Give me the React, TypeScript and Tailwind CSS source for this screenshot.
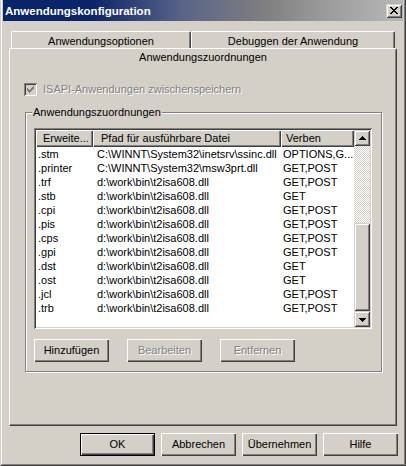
import React from "react";

const rows: [string, string, string][] = [
  [".stm", "C:\\WINNT\\System32\\inetsrv\\ssinc.dll", "OPTIONS,G..."],
  [".printer", "C:\\WINNT\\System32\\msw3prt.dll", "GET,POST"],
  [".trf", "d:\\work\\bin\\t2isa608.dll", "GET,POST"],
  [".stb", "d:\\work\\bin\\t2isa608.dll", "GET"],
  [".cpi", "d:\\work\\bin\\t2isa608.dll", "GET,POST"],
  [".pis", "d:\\work\\bin\\t2isa608.dll", "GET,POST"],
  [".cps", "d:\\work\\bin\\t2isa608.dll", "GET,POST"],
  [".gpi", "d:\\work\\bin\\t2isa608.dll", "GET,POST"],
  [".dst", "d:\\work\\bin\\t2isa608.dll", "GET"],
  [".ost", "d:\\work\\bin\\t2isa608.dll", "GET"],
  [".jcl", "d:\\work\\bin\\t2isa608.dll", "GET,POST"],
  [".trb", "d:\\work\\bin\\t2isa608.dll", "GET,POST"],
];

const raised =
  "shadow-[inset_1px_1px_0_#ffffff,inset_-1px_-1px_0_#404040,inset_-2px_-2px_0_#808080]";
const raisedThumb =
  "shadow-[inset_1px_1px_0_#d4d0c8,inset_-1px_-1px_0_#404040,inset_2px_2px_0_#ffffff,inset_-2px_-2px_0_#808080]";
const disabledText = "text-[#808080] [text-shadow:1px_1px_0_#ffffff]";

function Button({ label, disabled = false, isDefault = false }: { label: string; disabled?: boolean; isDefault?: boolean }) {
  if (isDefault) {
    return (
      <div className="w-[75px] h-[23px] border border-black">
        <div className={`w-full h-full flex items-center justify-center ${raised}`}>{label}</div>
      </div>
    );
  }
  return (
    <div className={`w-[75px] h-[23px] flex items-center justify-center ${raised} ${disabled ? disabledText : ""}`}>
      {label}
    </div>
  );
}

function Arrow({ down = false }: { down?: boolean }) {
  return (
    <div className={`w-[16px] h-[16px] bg-[#d4d0c8] flex items-center justify-center ${raisedThumb}`}>
      <svg width="7" height="4" viewBox="0 0 7 4" shapeRendering="crispEdges" className={down ? "rotate-180 mt-[1px]" : ""}>
        <path d="M3 0h1v1H3z M2 1h3v1H2z M1 2h5v1H1z M0 3h7v1H0z" fill="#000" />
      </svg>
    </div>
  );
}

export default function App() {
  return (
    <div className="w-[406px] h-[466px] bg-[#d4d0c8] border-l border-r border-b border-l-[#d4d0c8] border-r-[#404040] border-b-[#404040] font-['Liberation_Sans',Arial,sans-serif] text-[11px] leading-[13px] text-black">
      <div className="h-full flex flex-col border-l border-r border-b border-l-white border-r-[#808080] border-b-[#808080] px-px pb-px">
        {/* title bar */}
        <div className="h-[21px] shrink-0 flex items-center justify-between pl-[2px] pr-[1px] bg-[linear-gradient(to_right,#0a246a_0%,#0a246a_22%,#5a6488_45%,#808080_66%,#9a9a9a_80%,#b8b8b8_100%)]">
          <span className="font-bold text-white text-[11.5px] pt-[1px]">Anwendungskonfiguration</span>
          <div className={`w-[16px] h-[14px] bg-[#d4d0c8] flex items-center justify-center ${raisedThumb}`}>
            <svg width="8" height="7" viewBox="0 0 8 7" shapeRendering="crispEdges" className="-mt-[1px] -ml-[1px]">
              <path
                d="M0 0h2v1H0z M6 0h2v1H6z M1 1h2v1H1z M5 1h2v1H5z M2 2h4v1H2z M3 3h2v1H3z M2 4h4v1H2z M1 5h2v1H1z M5 5h2v1H5z M0 6h2v1H0z M6 6h2v1H6z"
                fill="#000"
              />
            </svg>
          </div>
        </div>

        {/* tab control */}
        <div className="mt-[10px] ml-[6px] w-[388px] flex flex-col">
          <div className="flex h-[17px] pl-[2px]">
            <div className="w-[180px] h-[17px] border-l border-t border-r border-l-white border-t-white border-r-[#404040] rounded-t-[2px] shadow-[inset_-1px_0_0_#808080] pt-[3px] text-center">
              Anwendungsoptionen
            </div>
            <div className="w-[204px] h-[17px] border-l border-t border-r border-l-white border-t-white border-r-[#404040] rounded-t-[2px] shadow-[inset_-1px_0_0_#808080] pt-[3px] text-center">
              Debuggen der Anwendung
            </div>
          </div>

          <div className="h-[378px] border border-l-white border-t-white border-r-[#404040] border-b-[#404040] rounded-t-[2px] shadow-[inset_-1px_-1px_0_#808080] flex flex-col">
            <div className="h-[17px] pt-[2px] text-center">Anwendungszuordnungen</div>

            <div className="mt-[17px] pl-[14px] flex items-center gap-[6px]">
              <div className="w-[13px] h-[13px] bg-[#d4d0c8] shadow-[inset_1px_1px_0_#808080,inset_-1px_-1px_0_#ffffff,inset_2px_2px_0_#404040,inset_-2px_-2px_0_#d4d0c8] flex items-center justify-center">
                <svg width="7" height="7" viewBox="0 0 7 7" shapeRendering="crispEdges">
                  <path
                    d="M6 0h1v1H6z M5 1h2v1H5z M0 2h1v1H0z M4 2h3v1H4z M0 3h2v1H0z M3 3h3v1H3z M0 4h5v1H0z M1 5h3v1H1z M2 6h1v1H2z"
                    fill="#808080"
                  />
                </svg>
              </div>
              <span className={disabledText}>ISAPI-Anwendungen zwischenspeichern</span>
            </div>

            {/* group box */}
            <div className="relative mt-[16px] ml-[15px] w-[357px] h-[260px] border border-[#808080] shadow-[inset_1px_1px_0_#ffffff,1px_1px_0_#ffffff] pt-[15px] pl-[8px]">
              <span className="absolute left-[6px] -top-[7px] px-px bg-[#d4d0c8]">Anwendungszuordnungen</span>

              <div className="w-[338px] h-[201px] p-[2px] shadow-[inset_1px_1px_0_#808080,inset_-1px_-1px_0_#ffffff,inset_2px_2px_0_#404040,inset_-2px_-2px_0_#d4d0c8]">
                <div className="w-full h-full bg-white flex">
                  <div className="w-[318px] flex flex-col overflow-hidden">
                    <div className="flex h-[17px] shrink-0 bg-[#d4d0c8]">
                      <div className={`w-[57px] pl-[7px] flex items-center ${raised}`}>Erweite...</div>
                      <div className={`w-[188px] pl-[8px] flex items-center ${raised}`}>Pfad für ausführbare Datei</div>
                      <div className={`w-[73px] pl-[5px] flex items-center ${raised}`}>Verben</div>
                    </div>
                    {rows.map(([ext, path, verbs]) => (
                      <div key={ext} className="flex h-[14px] leading-[14px] shrink-0 whitespace-nowrap">
                        <div className="w-[57px] pl-[2px] overflow-hidden">{ext}</div>
                        <div className="w-[188px] pl-[4px] overflow-hidden">{path}</div>
                        <div className="w-[73px] pl-[2px] overflow-hidden">{verbs}</div>
                      </div>
                    ))}
                  </div>
                  <div className="w-[16px] flex flex-col">
                    <Arrow />
                    <div className="h-[77px] bg-[repeating-conic-gradient(#ffffff_0%_25%,#d4d0c8_0%_50%)] bg-[length:2px_2px]" />
                    <div className={`h-[88px] bg-[#d4d0c8] ${raisedThumb}`} />
                    <Arrow down />
                  </div>
                </div>
              </div>

              <div className="mt-[10px] flex gap-[18px]">
                <Button label="Hinzufügen" />
                <Button label="Bearbeiten" disabled />
                <Button label="Entfernen" disabled />
              </div>
            </div>
          </div>
        </div>

        {/* dialog buttons */}
        <div className="mt-[7px] pr-[5px] flex justify-end gap-[6px]">
          <Button label="OK" isDefault />
          <Button label="Abbrechen" />
          <Button label="Übernehmen" />
          <Button label="Hilfe" />
        </div>
      </div>
    </div>
  );
}
